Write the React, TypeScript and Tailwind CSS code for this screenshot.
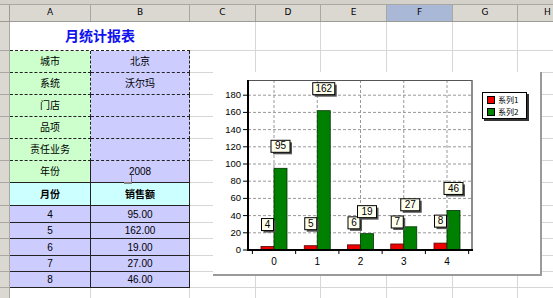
import React from "react";

const cols = [
  { id: "A", w: "w-[81px]" },
  { id: "B", w: "w-[99px]" },
  { id: "C", w: "w-[66px]" },
  { id: "D", w: "w-[65px]" },
  { id: "E", w: "w-[66px]" },
  { id: "F", w: "w-[66px]" },
  { id: "G", w: "w-[65px]" },
  { id: "H", w: "w-[60px]" },
];

type Row =
  | { kind: "title"; h: string }
  | { kind: "info"; h: string; a: string; b?: string; last?: boolean }
  | { kind: "head"; h: string }
  | { kind: "data"; h: string; m: string; v: string }
  | { kind: "empty"; h: string };

const rows: Row[] = [
  { kind: "title", h: "h-[29px]" },
  { kind: "info", h: "h-[22px]", a: "城市", b: "北京" },
  { kind: "info", h: "h-[22px]", a: "系统", b: "沃尔玛" },
  { kind: "info", h: "h-[22px]", a: "门店" },
  { kind: "info", h: "h-[22px]", a: "品项" },
  { kind: "info", h: "h-[22px]", a: "责任业务" },
  { kind: "info", h: "h-[22px]", a: "年份", b: "2008", last: true },
  { kind: "head", h: "h-[23px]" },
  { kind: "data", h: "h-[17px]", m: "4", v: "95.00" },
  { kind: "data", h: "h-[16px]", m: "5", v: "162.00" },
  { kind: "data", h: "h-[17px]", m: "6", v: "19.00" },
  { kind: "data", h: "h-[16px]", m: "7", v: "27.00" },
  { kind: "data", h: "h-[16px]", m: "8", v: "46.00" },
  { kind: "empty", h: "h-[20px]" },
];

const grid = "shrink-0 border-r border-b border-[#d6d6d6]";

function TableCells({ row }: { row: Row }) {
  if (row.kind === "title") {
    return (
      <div className="w-[180px] shrink-0 flex items-center justify-center border-b border-dashed border-[#222] text-[14px] font-bold text-[#1010f0]">
        月统计报表
      </div>
    );
  }
  if (row.kind === "info") {
    const bottom = row.last ? "border-solid" : "border-dashed";
    return (
      <>
        <div className={`w-[81px] shrink-0 flex items-center justify-center bg-[#ccffcc] border-r border-b ${bottom} border-[#222]`}>
          {row.a}
        </div>
        <div className={`w-[99px] shrink-0 flex items-center justify-center bg-[#ccccff] border-r border-b ${bottom} border-[#222]`}>
          {row.b}
        </div>
      </>
    );
  }
  if (row.kind === "head") {
    return (
      <>
        <div className="w-[81px] shrink-0 flex items-center justify-center bg-[#ccffff] border-r border-b border-[#222] font-bold">
          月份
        </div>
        <div className="w-[99px] shrink-0 flex items-center justify-center bg-[#ccffff] border-r border-b border-[#222] font-bold">
          销售额
        </div>
      </>
    );
  }
  if (row.kind === "data") {
    return (
      <>
        <div className="w-[81px] shrink-0 flex items-center justify-center bg-[#ccccff] border-r border-b border-[#222] font-['Liberation_Sans',sans-serif]">
          {row.m}
        </div>
        <div className="w-[99px] shrink-0 flex items-center justify-center bg-[#ccccff] border-r border-b border-[#222] font-['Liberation_Sans',sans-serif]">
          {row.v}
        </div>
      </>
    );
  }
  return (
    <>
      <div className={`w-[81px] ${grid}`} />
      <div className={`w-[99px] ${grid}`} />
    </>
  );
}

const s1 = [4, 5, 6, 7, 8];
const s2 = [95, 162, 19, 27, 46];
const cx = (i: number) => 61 + i * 43.25;
const vy = (v: number) => 178 - v * 0.86;

function Tag({ x, bottom, text }: { x: number; bottom: number; text: string }) {
  const w = text.length === 1 ? 12 : text.length === 2 ? 19 : 22;
  const h = 12;
  return (
    <g>
      <rect x={x - w / 2 + 2} y={bottom - h + 2} width={w} height={h} fill="#555" />
      <rect x={x - w / 2} y={bottom - h} width={w} height={h} fill="#ffffee" stroke="#000" strokeWidth={1} />
      <text x={x} y={bottom - h / 2 + 0.5} fontSize={10} textAnchor="middle" dominantBaseline="middle" fill="#000">
        {text}
      </text>
    </g>
  );
}

function Legend() {
  return (
    <div className="absolute left-[269px] top-[20px] w-[45px] h-[27px] bg-white border border-black shadow-[2px_2px_0_#333] pt-px pl-[4px] flex flex-col text-[8px] leading-[12px] font-['Noto_Sans_CJK_SC',sans-serif]">
      <div className="flex items-center gap-[3px] h-[12px]">
        <span className="w-[8px] h-[8px] bg-[#ee0000] border border-black" />
        <span>系列1</span>
      </div>
      <div className="flex items-center gap-[3px] h-[12px]">
        <span className="w-[8px] h-[8px] bg-[#008000] border border-black" />
        <span>系列2</span>
      </div>
    </div>
  );
}

function Chart() {
  const ticks = [0, 20, 40, 60, 80, 100, 120, 140, 160, 180];
  return (
    <div className="absolute left-[213px] top-[72px] w-[329px] h-[204px] bg-white border-r-2 border-b-2 border-[#9a9a9a]">
      <svg width={327} height={202} fontFamily="'Liberation Sans', Arial, sans-serif">
        {ticks.slice(1).map((v) => (
          <line key={"h" + v} x1={35} x2={259} y1={vy(v)} y2={vy(v)} stroke="#999" strokeDasharray="3 2" />
        ))}
        {s1.map((_, i) => (
          <line key={"v" + i} x1={cx(i)} x2={cx(i)} y1={8} y2={178} stroke="#999" strokeDasharray="3 2" />
        ))}
        <line x1={35} x2={259} y1={8.5} y2={8.5} stroke="#555" />
        <line x1={259} x2={259} y1={8} y2={178} stroke="#666" strokeWidth={1.5} />
        {ticks.map((v) => (
          <g key={"t" + v}>
            <line x1={30} x2={35} y1={vy(v)} y2={vy(v)} stroke="#000" />
            <text x={28} y={vy(v) + 0.5} fontSize={9.5} textAnchor="end" dominantBaseline="middle" fill="#000">
              {v}
            </text>
          </g>
        ))}
        {[0, 1, 2, 3, 4, 5].map((i) => (
          <line key={"x" + i} x1={cx(i) - 21.6} x2={cx(i) - 21.6} y1={178} y2={182} stroke="#000" />
        ))}
        {s1.map((_, i) => (
          <text key={"l" + i} x={cx(i)} y={190} fontSize={10} textAnchor="middle" dominantBaseline="middle" fill="#000">
            {i}
          </text>
        ))}
        {s1.map((v, i) => (
          <rect key={"r" + i} x={cx(i) - 13} y={vy(v)} width={13} height={v * 0.86} fill="#ee0000" stroke="#550000" strokeWidth={0.8} />
        ))}
        {s2.map((v, i) => (
          <rect key={"g" + i} x={cx(i)} y={vy(v)} width={13} height={v * 0.86} fill="#008000" stroke="#003300" strokeWidth={0.8} />
        ))}
        <line x1={35} x2={35} y1={8} y2={179} stroke="#000" strokeWidth={2} />
        <line x1={34} x2={260} y1={178} y2={178} stroke="#000" strokeWidth={2} />
        {s1.map((v, i) => (
          <Tag key={"a" + i} x={cx(i) - 6.5} bottom={vy(v) - 16} text={String(v)} />
        ))}
        {s2.map((v, i) => (
          <Tag key={"b" + i} x={cx(i) + 6.5} bottom={vy(v) - 16} text={String(v)} />
        ))}
      </svg>
      <Legend />
    </div>
  );
}

export default function App() {
  return (
    <div className="relative w-[553px] h-[298px] overflow-hidden bg-white text-[10px] text-black font-['Liberation_Sans','Noto_Sans_CJK_SC',sans-serif]">
      <div className="h-[5px] bg-[#d4d1ca] border-b border-[#a9a7a1]" />
      <div className="flex h-[17px] bg-[#dbd8d2] border-b border-[#9c9a94] font-['DejaVu_Sans',sans-serif] text-[9px]">
        <div className="w-[10px] shrink-0 border-r border-[#9c9a94]" />
        {cols.map((c) => (
          <div
            key={c.id}
            className={`${c.w} shrink-0 flex items-center justify-center border-r border-[#a9a7a1] ${c.id === "F" ? "bg-[#a9b8d6]" : ""}`}
          >
            {c.id}
          </div>
        ))}
      </div>
      {rows.map((row, r) => (
        <div key={r} className={`flex ${row.h}`}>
          <div className="w-[10px] shrink-0 bg-[#dbd8d2] border-r border-b border-[#a9a7a1]" />
          <TableCells row={row} />
          {cols.slice(2).map((c) => (
            <div key={c.id} className={`${c.w} ${grid}`} />
          ))}
        </div>
      ))}
      <div className="absolute left-[124px] top-[182px] w-[8px] h-[2px] bg-[#888]" />
      <div className="absolute left-[131px] top-[175px] w-px h-[8px] bg-[#777]" />
      <Chart />
    </div>
  );
}
